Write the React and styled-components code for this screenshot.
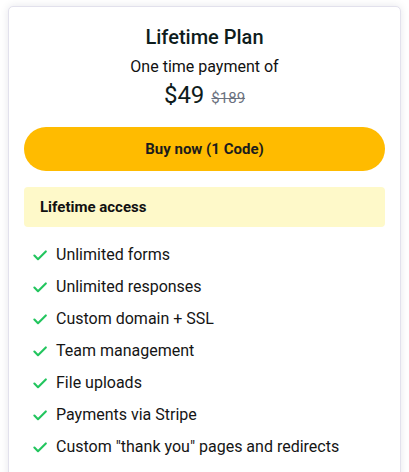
import React from "react";
import styled, { createGlobalStyle } from "styled-components";

const Global = createGlobalStyle`
  html, body { margin: 0; padding: 0; background: #ffffff; }
  body { font-family: Roboto, "Liberation Sans", sans-serif; overflow: hidden; }
`;

const Page = styled.div`
  padding: 6px 8px 0 8px;
  height: 472px;
  box-sizing: border-box;
  overflow: hidden;
`;

const Card = styled.div`
  width: 393px;
  box-sizing: border-box;
  background: #ffffff;
  border: 1px solid #e2e1ec;
  border-radius: 5px;
  box-shadow: 0 0 8px rgba(20, 20, 60, 0.1);
  padding: 16px 15px 40px 15px;
  display: flex;
  flex-direction: column;
`;

const Header = styled.div`
  display: flex;
  flex-direction: column;
  align-items: center;
`;

const Title = styled.h2`
  margin: 0;
  font-size: 20px;
  line-height: 28px;
  font-weight: 500;
  color: #0e1c1c;
`;

const Subtitle = styled.div`
  margin-top: 4px;
  font-size: 16px;
  line-height: 24px;
  color: #111;
`;

const PriceRow = styled.div`
  display: flex;
  align-items: baseline;
  gap: 7px;
`;

const Price = styled.span`
  font-size: 24px;
  line-height: 32px;
  font-weight: 400;
  color: #0e1c1c;
`;

const OldPrice = styled.span`
  font-size: 15px;
  color: #6b7280;
  text-decoration: line-through;
`;

const BuyButton = styled.button`
  margin-top: 16px;
  height: 44px;
  border: none;
  border-radius: 22px;
  background: #ffbb00;
  color: #1c1c1c;
  font-family: Roboto, "Liberation Sans", sans-serif;
  font-weight: 700;
  font-size: 15px;
  cursor: pointer;
`;

const AccessBox = styled.div`
  margin-top: 16px;
  height: 40px;
  border-radius: 4px;
  background: #fef9c9;
  display: flex;
  align-items: center;
  padding: 0 16px;
  font-size: 15px;
  font-weight: 700;
  color: #111;
`;

const FeatureList = styled.ul`
  list-style: none;
  margin: 16px 0 0 0;
  padding: 0 0 0 9px;
  display: flex;
  flex-direction: column;
  gap: 8px;
`;

const Feature = styled.li`
  display: flex;
  align-items: center;
  gap: 9px;
  font-size: 16px;
  line-height: 24px;
  color: #151515;
`;

const Check = () => (
  <svg width="14" height="11" viewBox="0 0 14 11" fill="none">
    <path d="M1.4 5.6 L5 9.2 L12.8 1.4" stroke="#22c55e" strokeWidth="2.1" strokeLinecap="round" strokeLinejoin="round" />
  </svg>
);

const features = [
  "Unlimited forms",
  "Unlimited responses",
  "Custom domain + SSL",
  "Team management",
  "File uploads",
  "Payments via Stripe",
  'Custom "thank you" pages and redirects',
];

export default function App() {
  return (
    <>
      <Global />
      <Page>
        <Card>
          <Header>
            <Title>Lifetime Plan</Title>
            <Subtitle>One time payment of</Subtitle>
            <PriceRow>
              <Price>$49</Price>
              <OldPrice>$189</OldPrice>
            </PriceRow>
          </Header>
          <BuyButton>Buy now (1 Code)</BuyButton>
          <AccessBox>Lifetime access</AccessBox>
          <FeatureList>
            {features.map((f) => (
              <Feature key={f}>
                <Check />
                {f}
              </Feature>
            ))}
          </FeatureList>
        </Card>
      </Page>
    </>
  );
}
